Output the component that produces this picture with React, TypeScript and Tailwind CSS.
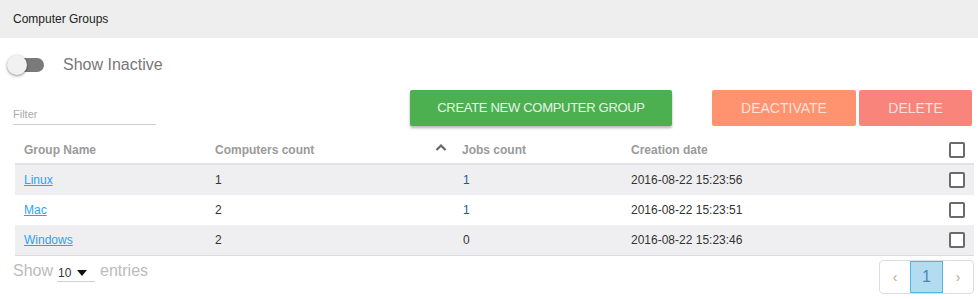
import React from "react";

type Group = { name: string; computers: number; jobs: number; created: string };

const groups: Group[] = [
  { name: "Linux", computers: 1, jobs: 1, created: "2016-08-22 15:23:56" },
  { name: "Mac", computers: 2, jobs: 1, created: "2016-08-22 15:23:51" },
  { name: "Windows", computers: 2, jobs: 0, created: "2016-08-22 15:23:46" },
];

const cols = "grid grid-cols-[191px_247px_169px_1fr_40px] items-center";

function Checkbox() {
  return <div className="w-[16px] h-[16px] border-2 border-[#6b6b6b] rounded-[2px] bg-white" />;
}

export default function App() {
  return (
    <div className="w-[978px] h-[299px] bg-white font-['Liberation_Sans',Arial,sans-serif] overflow-hidden">
      {/* Title bar */}
      <div className="h-[38px] bg-[#eeeeee] flex items-center px-[13px] text-[12px] text-[#222]">
        Computer Groups
      </div>

      {/* Show inactive toggle */}
      <div className="flex items-center h-[52px] pl-[7px] pt-[1px]">
        <div className="relative w-[37px] h-[20px]">
          <div className="absolute left-[3px] right-0 top-[3px] h-[14px] rounded-full bg-[#7a7a7a]" />
          <div className="absolute left-0 top-0 w-[20px] h-[20px] rounded-full bg-[#f1f1f1] shadow-[0_1px_3px_rgba(0,0,0,0.45)]" />
        </div>
        <span className="ml-[19px] text-[16px] text-[#777]">Show Inactive</span>
      </div>

      {/* Filter + actions */}
      <div className="flex items-start h-[46px]">
        <div className="ml-[13px] mt-[16px] w-[143px] border-b border-[#cfcfcf] text-[11px] text-[#aaa] leading-[16px] pb-[2px]">
          Filter
        </div>
        <button className="ml-[254px] w-[262px] h-[36px] bg-[#4caf50] text-[#e6f4e6] text-[13px] tracking-[-0.3px] rounded-[2px] shadow-[0_2px_3px_rgba(0,0,0,0.3)]">
          CREATE NEW COMPUTER GROUP
        </button>
        <button className="ml-[40px] w-[144px] h-[36px] bg-[#ff926f] text-[#fde3da] text-[14px] rounded-[2px]">
          DEACTIVATE
        </button>
        <button className="ml-[3px] w-[113px] h-[36px] bg-[#f8847b] text-[#fde0dd] text-[14px] rounded-[2px]">
          DELETE
        </button>
      </div>

      {/* Table */}
      <div className="ml-[15px] mr-[4px]">
        <div className={`${cols} h-[29px] border-b-2 border-[#e2e2e2] text-[12px] font-bold text-[#9a9a9a]`}>
          <div className="pl-[9px]">Group Name</div>
          <div className="pl-[9px]">Computers count</div>
          <div className="pl-[9px] relative">
            <svg
              className="absolute left-[-18px] top-[2px]"
              width="12"
              height="9"
              viewBox="0 0 12 9"
            >
              <path d="M1.5 7 L6 2.5 L10.5 7" fill="none" stroke="#666" strokeWidth="2.2" />
            </svg>
            Jobs count
          </div>
          <div className="pl-[9px]">Creation date</div>
          <div className="flex justify-end pr-[9px]">
            <Checkbox />
          </div>
        </div>
        {groups.map((g, i) => (
          <div
            key={g.name}
            className={`${cols} h-[30px] text-[12px] leading-[14px] pb-[1px] text-[#333] ${i % 2 === 0 ? "bg-[#efeff1]" : "bg-white"}`}
          >
            <div className="pl-[9px]">
              <a href="#" className="text-[#2aa2f6] underline">
                {g.name}
              </a>
            </div>
            <div className="pl-[9px]">{g.computers}</div>
            <div className="pl-[10px] text-[#1a5aa0]">{g.jobs === 0 ? <span className="text-[#333]">0</span> : g.jobs}</div>
            <div className="pl-[9px]">{g.created}</div>
            <div className="flex justify-end pr-[9px]">
              <Checkbox />
            </div>
          </div>
        ))}
        <div className="border-t border-[#dcdcdc]" />
      </div>

      {/* Footer */}
      <div className="flex items-start justify-between pl-[13px] pr-[4px] pt-[4px]">
        <div className="flex items-center -mt-[1px] text-[16px] text-[#bbb]">
          <span>Show</span>
          <div className="ml-[4px] w-[38px] h-[22px] border-b border-[#cfcfcf] flex items-center justify-between pr-[8px] pt-[4px]">
            <span className="text-[12px] text-[#333] pl-[1px]">10</span>
            <svg width="10" height="6" viewBox="0 0 10 6">
              <path d="M0 0 L10 0 L5 6 Z" fill="#111" />
            </svg>
          </div>
          <span className="ml-[5px]">entries</span>
        </div>
        <div className="flex h-[34px] border border-[#dddddd] rounded-[4px] overflow-hidden">
          <div className="w-[30px] flex items-center justify-center text-[14px] text-[#c9a27e]">‹</div>
          <div className="w-[33px] flex items-center justify-center bg-[#b3dcf1] border border-[#4fb6e6] text-[16px] text-[#4d86b5]">
            1
          </div>
          <div className="w-[30px] flex items-center justify-center text-[14px] text-[#c9a27e]">›</div>
        </div>
      </div>
    </div>
  );
}
